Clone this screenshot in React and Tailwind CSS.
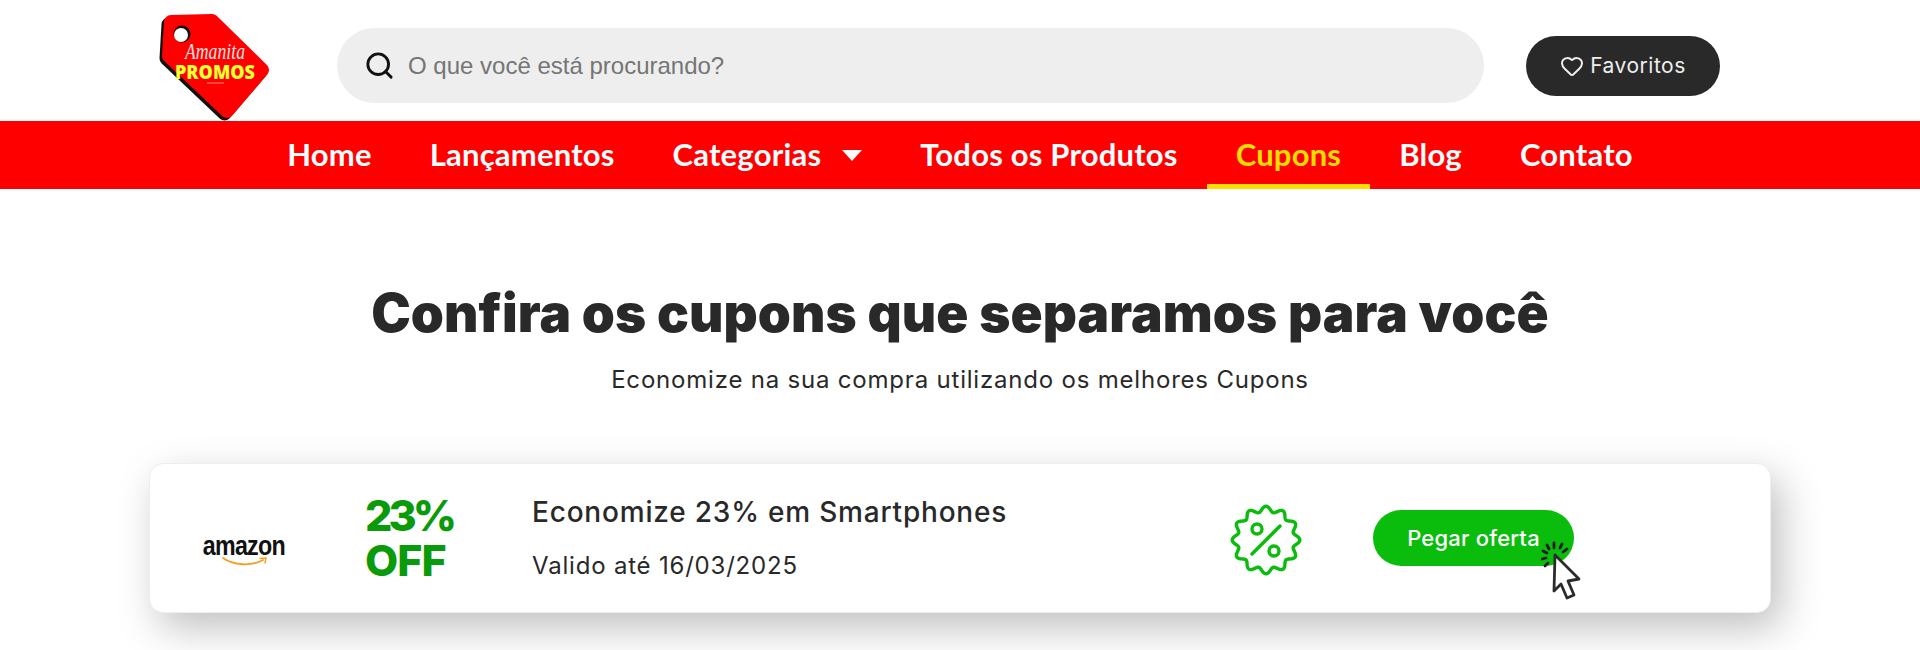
import React from 'react';
import { Search, Heart } from 'lucide-react';

const navItems = ['Home', 'Lançamentos', 'Categorias', 'Todos os Produtos', 'Cupons', 'Blog', 'Contato'];

const Logo = () => (
  <svg width="120" height="116" viewBox="0 0 120 116" className="shrink-0 overflow-visible">
    <path d="M15 15 L56 14 L106 63 L71 104 L13 49 Z" fill="#111" stroke="#111" strokeWidth="14" strokeLinejoin="round" transform="translate(-1.5 1.5)" />
    <path d="M16 14 L57 13 L107 62 L72 103 L14 48 Z" fill="#ff0000" stroke="#ff0000" strokeWidth="14" strokeLinejoin="round" />
    <circle cx="27" cy="26" r="8.5" fill="#111" />
    <circle cx="26" cy="27" r="7" fill="#fff" />
    <text x="60" y="51" textAnchor="middle" fontSize="24" fontStyle="italic" fontFamily="'Liberation Serif', serif" fill="#f0e4e4" textLength="60" lengthAdjust="spacingAndGlyphs">Amanita</text>
    <text x="60" y="71" textAnchor="middle" fontSize="19" fontWeight="800" fontFamily="'Open Sans', sans-serif" fill="#ffff33" textLength="80" lengthAdjust="spacingAndGlyphs">PROMOS</text>
    <line x1="52" y1="75" x2="69" y2="75" stroke="#f08080" strokeWidth="1" />
  </svg>
);

const DiscountBadge = () => {
  // scalloped outline, 12 lobes
  const pts = [];
  for (let i = 0; i < 240; i++) {
    const a = (i / 240) * Math.PI * 2;
    const r = 31 + 2.8 * Math.cos(12 * a);
    pts.push(`${(36 + r * Math.sin(a)).toFixed(2)},${(36 - r * Math.cos(a)).toFixed(2)}`);
  }
  return (
    <svg width="72" height="72" viewBox="0 0 72 72" fill="none" stroke="#0abc0c" strokeWidth="3.4" strokeLinecap="round" className="mt-[3px] shrink-0">
      <polygon points={pts.join(' ')} strokeLinejoin="round" />
      <circle cx="27" cy="25" r="5" />
      <circle cx="44" cy="47" r="5" />
      <line x1="50" y1="22" x2="22" y2="50" />
    </svg>
  );
};

const ClickCursor = () => (
  <svg width="42" height="62" viewBox="0 0 42 62" className="absolute left-[168px] top-[30px]" fill="none">
    <g stroke="#1c1c1c" strokeWidth="2.8" strokeLinecap="round">
      <line x1="13" y1="3" x2="13" y2="8" />
      <line x1="21" y1="4" x2="19" y2="8" />
      <line x1="26" y1="9" x2="22" y2="12" />
      <line x1="6" y1="5" x2="8" y2="9" />
      <line x1="2" y1="11" x2="6" y2="13" />
      <line x1="1" y1="19" x2="5" y2="18" />
      <line x1="4" y1="26" x2="7" y2="23" />
    </g>
    <path d="M14 15 L38 39 L27 41 L33 55 L26 58 L20 44 L13 51 Z" fill="#fff" stroke="#2b2b2b" strokeWidth="2.8" strokeLinejoin="round" />
  </svg>
);

const AmazonLogo = () => (
  <div className="mt-[26px] flex w-[84px] shrink-0 flex-col items-center">
    <span className="scale-x-[0.86] text-[27px] leading-[22px] font-bold tracking-[-0.8px] text-[#111] [font-family:'Liberation_Sans',sans-serif]">amazon</span>
    <svg width="46" height="10" viewBox="0 0 46 10" fill="none" className="ml-[1px]">
      <path d="M1 1 C12 9 30 9 41 3" stroke="#f79c1c" strokeWidth="1.8" strokeLinecap="round" />
      <path d="M38 1.5 L44 1 L43 6" stroke="#f79c1c" strokeWidth="1.4" strokeLinecap="round" />
    </svg>
  </div>
);

export default function App() {
  return (
    <div className="h-[650px] overflow-hidden bg-white [font-family:Inter,sans-serif]">
      <header className="flex h-[121px] items-center pl-[155px] pt-[10px]">
        <Logo />
        <div className="ml-[62px] flex h-[75px] w-[1147px] items-center rounded-full bg-[#eeeeee] pl-[27px]">
          <Search size={31} strokeWidth={2.2} className="text-[#111]" />
          <span className="ml-[13px] text-[24px] text-[#757575] [font-family:'Liberation_Sans',sans-serif]">O que você está procurando?</span>
        </div>
        <button className="ml-[42px] flex h-[60px] w-[194px] items-center justify-center gap-[6px] rounded-full bg-[#292929] text-[21px] tracking-[0.5px] text-[#eeeeee]">
          <Heart size={24} strokeWidth={2} />
          Favoritos
        </button>
      </header>

      <nav className="flex h-[68px] items-stretch justify-center bg-[#ff0000] text-[31px] font-bold tracking-[0.2px] text-white [font-family:Lato,sans-serif]">
        {navItems.map((item) => (
          <a
            key={item}
            className={
              item === 'Cupons'
                ? 'flex items-center border-b-[5px] border-[#ffdd00] px-[29px] pt-[3px] text-[#ffdd00]'
                : 'flex items-center border-b-[5px] border-transparent px-[29px] pt-[3px]'
            }
          >
            {item}
            {item === 'Categorias' && (
              <span className="ml-[21px] mt-[2px] h-0 w-0 border-x-[10px] border-t-[11px] border-x-transparent border-t-white" />
            )}
          </a>
        ))}
      </nav>

      <main className="flex flex-col items-center pt-[92px]">
        <h1 className="text-[53px] leading-[64px] font-black tracking-[0.1px] text-[#292929]">
          Confira os cupons que separamos para você
        </h1>
        <p className="mt-[19px] text-[24px] leading-[32px] tracking-[0.8px] text-[#292929]">
          Economize na sua compra utilizando os melhores Cupons
        </p>

        <section className="mt-[67px] flex h-[150px] w-[1622px] items-center rounded-[14px] border border-[#eeeeee] bg-white pl-[52px] shadow-[10px_15px_40px_rgba(0,0,0,0.25)]">
          <AmazonLogo />
          <div className="ml-[79px] w-[167px] text-[43px] leading-[45px] font-extrabold text-[#0a9a0a]">
            <div className="tracking-[-4px]">23%</div>
            <div className="tracking-[-1px]">OFF</div>
          </div>
          <div className="mt-[2px] w-[698px] tracking-[0.8px] text-[#292929]">
            <div className="text-[28px] leading-[36px] font-medium">Economize 23% em Smartphones</div>
            <div className="mt-[18px] text-[24px] leading-[36px]">Valido até 16/03/2025</div>
          </div>
          <DiscountBadge />
          <div className="relative ml-[71px]">
            <button className="h-[56px] w-[201px] rounded-full bg-[#0abc0c] text-[22px] font-medium tracking-[0.2px] text-white">
              Pegar oferta
            </button>
            <ClickCursor />
          </div>
        </section>
      </main>
    </div>
  );
}
